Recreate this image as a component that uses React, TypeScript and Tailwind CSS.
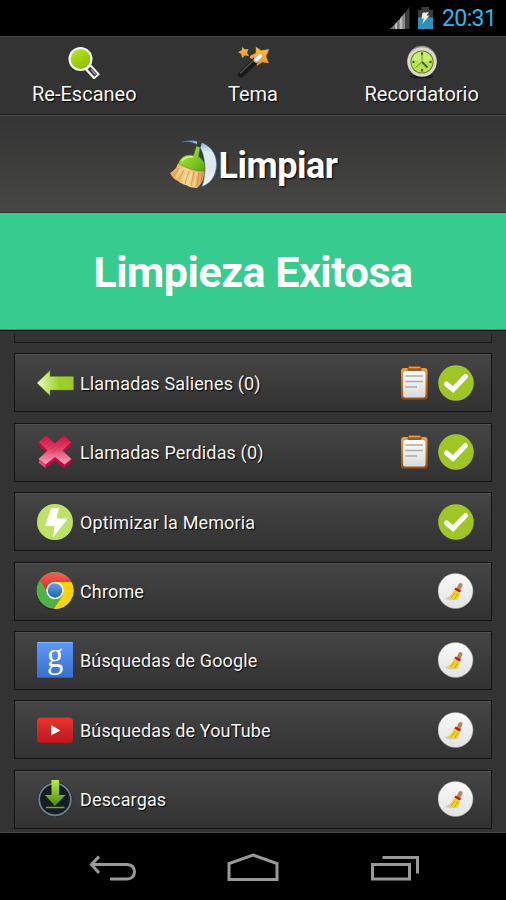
import type { ReactNode } from 'react'

type Row = {
  label: string
  icon: ReactNode
  notes?: boolean
  done?: boolean
}

/* Status bar */
function StatusBar() {
  return (
    <div className="flex items-center justify-end h-9 pr-[10px] bg-black shrink-0">
      <svg width="20" height="22" viewBox="0 0 20 22" className="mr-2">
        <path d="M0 22 L5 17 V22Z" fill="#777" />
        <path d="M5 17 L9 13 V22 H5Z" fill="#c4c4c4" />
        <path d="M7 15 L9 13 V22 H7Z" fill="#777" />
        <path d="M9 13 L13 8 V22 H9Z" fill="#8e8e8e" />
        <path d="M10 11.7 L12 9.2 V22 H10Z" fill="#bbb" />
        <path d="M13 8 L15 5.7 V22 H13Z" fill="#888" />
        <path d="M15 5.7 L19.5 0 V22 H15Z" fill="#3d3d3d" />
      </svg>
      <svg width="15" height="22" viewBox="0 0 15 23" preserveAspectRatio="none" className="mr-[9px] mb-px">
        <path d="M3.5 0 H11 V3 H15 V23 H0 V3 H3.5Z" fill="#3b3b3b" />
        <path d="M0 11 H15 V23 H0Z" fill="#2b92b9" />
        <path d="M4.5 6 L11 5.5 L8.5 9 H11.5 L4 18 L6 12 H3.5Z" fill="#eee" />
      </svg>
      <span className="pt-[2px] text-[23px] leading-[34px] text-[#33b5e5] w-[54px] whitespace-nowrap tracking-[-0.6px]">20:31</span>
    </div>
  )
}

/* Toolbar icons */
function SearchIcon() {
  return (
    <svg width="34" height="34" viewBox="0 0 34 34">
      <defs>
        <linearGradient id="lens" x1="0" y1="0" x2="0.6" y2="1">
          <stop offset="0" stopColor="#c3e34a" />
          <stop offset="0.45" stopColor="#a5d60a" />
          <stop offset="1" stopColor="#93bd00" />
        </linearGradient>
      </defs>
      <path d="M20 21 L30 32" stroke="#f4f4f4" strokeWidth="8" />
      <path d="M22 23 L28.800 30.500" stroke="#3a3a3a" strokeWidth="3.800" />
      <path d="M24 24.500 L28.500 29.500" stroke="#999" strokeWidth="1.300" />
      <circle cx="13.5" cy="14" r="12" fill="#f8f8f8" />
      <circle cx="13.5" cy="14" r="9.9" fill="url(#lens)" />
    </svg>
  )
}

function WandIcon() {
  return (
    <svg width="34" height="34" viewBox="0 0 34 34">
      <defs>
        <linearGradient id="star" x1="0" y1="0" x2="0" y2="1">
          <stop offset="0" stopColor="#ffc640" />
          <stop offset="1" stopColor="#f39312" />
        </linearGradient>
      </defs>
      <path d="M20 2 L25 5.500 L33 4.500 L30 11 L32.500 18 L26.500 17 L21 20.500 L20 14.500 L15.500 10.500 L20 8Z" fill="url(#star)" stroke="#e58c16" strokeWidth="0.500" strokeLinejoin="round" />
      <path d="M5 29.500 L20 15.500" stroke="#191919" strokeWidth="6" strokeLinecap="round" />
      <path d="M4.500 28 L18 15" stroke="#505050" strokeWidth="1.500" strokeLinecap="round" />
      <path d="M20.500 15 L24 11.500" stroke="#aaa" strokeWidth="6" strokeLinecap="round" />
      <path d="M20.500 14.500 L24 11" stroke="#f4f4f4" strokeWidth="4" strokeLinecap="round" />
      <path d="M6.500 2 L8.500 4.500 L12.500 4 L11 7.500 L13 11 L9 10.500 L6 13 L5.200 9 L2 7 L5.500 5.500Z" fill="url(#star)" />
      <path d="M14.500 10.500 L17 9.500 L18 12 L16 14 L13.500 12.500Z" fill="#f5a11d" />
    </svg>
  )
}

function ClockIcon() {
  return (
    <svg width="34" height="34" viewBox="0 0 34 34">
      <ellipse cx="17" cy="31.500" rx="12" ry="2" fill="#1c1c1c" />
      <circle cx="17" cy="15.500" r="14.700" fill="#8a8d80" />
      <circle cx="17" cy="17" r="14.700" fill="#d9dacb" />
      <circle cx="17" cy="17" r="11.600" fill="#6c7e31" />
      <circle cx="17" cy="17" r="10.600" fill="#b7e34f" />
      <path d="M7.500 14 A10 10 0 0 1 26.500 14 Q17 20 7.500 14Z" fill="#d4f184" opacity="0.7" />
      <path d="M17 7.500 V10 M17 24 V26.500 M7.500 17 H9.500 M24.500 17 H26.500" stroke="#405014" strokeWidth="2" />
      <path d="M17 17 V9 M17 17 L10.500 22.500" stroke="#778e39" strokeWidth="1" />
      <path d="M17 17 L22.500 22.500" stroke="#43591a" strokeWidth="1.800" />
    </svg>
  )
}

function BroomLogo() {
  return (
    <svg width="48" height="50" viewBox="0 0 48 50" className="shrink-0">
      <defs>
        <linearGradient id="moon" x1="0" y1="0" x2="0" y2="1">
          <stop offset="0" stopColor="#7fb0dc" />
          <stop offset="0.25" stopColor="#dcecfa" />
          <stop offset="0.6" stopColor="#dfe5ec" />
          <stop offset="1" stopColor="#f6fafe" />
        </linearGradient>
        <linearGradient id="brush" x1="0" y1="0" x2="1" y2="0">
          <stop offset="0" stopColor="#eda24a" />
          <stop offset="0.5" stopColor="#fad694" />
          <stop offset="1" stopColor="#e39a45" />
        </linearGradient>
        <linearGradient id="cap" x1="0" y1="0" x2="1" y2="1">
          <stop offset="0" stopColor="#b9e54c" />
          <stop offset="0.6" stopColor="#83c822" />
          <stop offset="1" stopColor="#5ca510" />
        </linearGradient>
      </defs>
      <path d="M13 3 C31 -2 47.500 8 47.500 25 C47.500 37 41 45 33 47.500 C37 38 38 15 29 6 C23 2.500 18 2 13 3Z" fill="url(#moon)" stroke="#487fae" strokeWidth="0.500" />
      <path d="M9 24 L35 31 C36 38 33 45 28 49 C23 49 20 48 18 46.500 C15 46 11 44 9 42 C6 41 3 38 1 34 C6 31 8 28 9 24Z" fill="url(#brush)" />
      <path d="M10 29 L5 37 M15 31 L10 41 M20 32 L16 45 M25 33 L22 47 M30 34 L28 47 M33.500 34 L32 43" stroke="#c57c31" strokeWidth="0.600" />
      <path d="M12 30 L7 39 M18 32 L14 43 M23 33 L19 45 M27.500 33 L25 47" stroke="#ffe9b9" strokeWidth="0.900" />
      <path d="M9.500 24.500 C11 18 18 14.500 24.500 16.500 L27.500 7 L31 8 L29.500 17.500 C35 21 36.500 26 35.500 32 C27 32.500 16 29 9.500 24.500Z" fill="url(#cap)" stroke="#4c8315" strokeWidth="0.500" />
      <path d="M13 22 C15 19 20 17 24 18" stroke="#dcf797" strokeWidth="1.500" fill="none" />
      <path d="M28.500 2 L33 3 L31.500 8.500 L27.500 7Z" fill="#333b29" />
    </svg>
  )
}

/* Row icons */
function ArrowIcon() {
  return (
    <svg width="38" height="38" viewBox="0 0 38 38">
      <defs>
        <linearGradient id="arrow" x1="0" y1="0" x2="1" y2="0">
          <stop offset="0" stopColor="#eef9c2" />
          <stop offset="0.6" stopColor="#9cd12a" />
          <stop offset="1" stopColor="#9ccb27" />
        </linearGradient>
      </defs>
      <path d="M1 19 L14 6.500 V12.500 H37.500 V26 H14 V31.500Z" fill="url(#arrow)" stroke="#6b9727" strokeWidth="0.500" />
    </svg>
  )
}

function CrossIcon() {
  return (
    <svg width="38" height="38" viewBox="0 0 38 38">
      <defs>
        <linearGradient id="cross" gradientUnits="userSpaceOnUse" x1="19" y1="2" x2="19" y2="33">
          <stop offset="0" stopColor="#d90d43" />
          <stop offset="0.45" stopColor="#e0416b" />
          <stop offset="0.9" stopColor="#ff9bb5" />
        </linearGradient>
      </defs>
      <path d="M3 9 L10 3 L19 10.500 L28 3 L35 9 V13 L27 20 L35 27 V30 L28 35.500 L19 28 L10 35.500 L3 30 V27 L11 20 L3 13Z" fill="#b3103f" />
      <path d="M3 9 L10 2.500 L19 10.500 L28 2.500 L35 9 L26.500 17.500 L35.500 26 L28.500 31.500 L19 24 L9.500 31.500 L2.500 26 L11.500 17.500Z" fill="url(#cross)" />
      <path d="M6 9.500 L11 5 M8.500 12 L13.500 7.500 M11 14.500 L16 10 M13.500 17 L29 4 M16 19.500 L32 6" stroke="#b00d3b" strokeWidth="0.500" opacity="0.6" />
      <path d="M3 27 L9.500 32 V35 L3 30Z" fill="#e2527b" />
    </svg>
  )
}

function BoltIcon() {
  return (
    <svg width="38" height="38" viewBox="0 0 38 38">
      <circle cx="19" cy="19" r="18" fill="#bee268" />
      <path d="M15 5 H23 L20.500 15.500 H32 L17 34.500 L18.500 23 H9Z" fill="#fff" />
    </svg>
  )
}

function ChromeIcon() {
  return (
    <svg width="38" height="40" viewBox="0 0 38 40">
      <defs>
        <linearGradient id="chromeRed" x1="0" y1="0" x2="0" y2="1">
          <stop offset="0" stopColor="#ef6359" />
          <stop offset="1" stopColor="#d8291f" />
        </linearGradient>
        <linearGradient id="chromeBlue" x1="0" y1="0" x2="0" y2="1">
          <stop offset="0" stopColor="#62a5df" />
          <stop offset="1" stopColor="#1e65b2" />
        </linearGradient>
      </defs>
      <circle cx="19" cy="20.500" r="18.800" fill="#242424" />
      <circle cx="19" cy="19.500" r="18.500" fill="#51b147" />
      <path d="M19 11 H35.500 A18.500 18.500 0 0 1 18 38 L27 24Z" fill="#ffd20a" />
      <path d="M4 9 A18.500 18.500 0 0 1 35.500 11 H19 C14 11 10.500 15 10.500 20Z" fill="url(#chromeRed)" />
      <circle cx="19" cy="19.500" r="8.700" fill="#f0f3f5" />
      <circle cx="19" cy="19.500" r="7.200" fill="url(#chromeBlue)" />
    </svg>
  )
}

function GoogleIcon() {
  return (
    <div className="flex items-center justify-center w-9 h-9 ml-px rounded-[1px] bg-linear-to-b from-[#5e98f5] to-[#3970d2] border-t border-t-[#85b4fa] border-b border-b-[#3159a5]">
      <span className="font-['Liberation_Serif',serif] text-[36px] leading-9 text-white relative -top-[5px] scale-x-90">g</span>
    </div>
  )
}

function YoutubeIcon() {
  return (
    <svg width="38" height="38" viewBox="0 0 38 38">
      <defs>
        <linearGradient id="tube" x1="0" y1="0" x2="0" y2="1">
          <stop offset="0" stopColor="#e83430" />
          <stop offset="1" stopColor="#bd171d" />
        </linearGradient>
      </defs>
      <rect x="1" y="6.500" width="36" height="25.500" rx="4" fill="url(#tube)" />
      <path d="M15 14 L24.500 19.500 L15 24.500Z" fill="#fff" />
    </svg>
  )
}

function DownloadIcon() {
  return (
    <svg width="38" height="40" viewBox="0 0 38 40">
      <defs>
        <linearGradient id="down" x1="0" y1="0" x2="0" y2="1">
          <stop offset="0" stopColor="#b8f13d" />
          <stop offset="1" stopColor="#4b8614" />
        </linearGradient>
      </defs>
      <circle cx="19" cy="20.500" r="17.500" fill="#27313a" />
      <circle cx="19" cy="20.500" r="15.800" fill="#151c23" stroke="#78828a" strokeWidth="1.700" />
      <path d="M15.500 1 H23 V16 H29.500 L19 27 L9 16 H15.500Z" fill="url(#down)" />
      <path d="M10 28.500 H28.500" stroke="#69a629" strokeWidth="1.500" />
    </svg>
  )
}

function Clipboard() {
  return (
    <svg width="28" height="34" viewBox="0 0 28 34">
      <defs>
        <linearGradient id="board" x1="0" y1="0" x2="0" y2="1">
          <stop offset="0" stopColor="#e9a150" />
          <stop offset="1" stopColor="#9c4c12" />
        </linearGradient>
        <linearGradient id="paper" x1="0" y1="0" x2="0" y2="1">
          <stop offset="0" stopColor="#fff" />
          <stop offset="1" stopColor="#dadada" />
        </linearGradient>
      </defs>
      <rect x="1" y="2" width="26.500" height="31.500" rx="3" fill="url(#board)" />
      <rect x="3" y="5" width="22.500" height="26.500" rx="2.500" fill="url(#paper)" />
      <rect x="7.500" y="0.500" width="14" height="4.500" rx="1.500" fill="#a35a19" />
      <path d="M9 1.500 H20" stroke="#e3a057" strokeWidth="1.500" />
      <path d="M5.500 10 H23 M5.500 15.500 H23 M5.500 21 H17" stroke="#aaa" strokeWidth="1.500" />
    </svg>
  )
}

function CheckBadge() {
  return (
    <svg width="36" height="36" viewBox="0 0 36 36">
      <circle cx="18" cy="18" r="17.800" fill="#a0c526" />
      <path d="M8.500 19 L15 24.500 L27.500 11.500" fill="none" stroke="#fff" strokeWidth="5" strokeLinecap="round" />
    </svg>
  )
}

function BroomBadge() {
  return (
    <svg width="36" height="36" viewBox="0 0 36 36">
      <defs>
        <linearGradient id="badge" x1="0" y1="0" x2="0" y2="1">
          <stop offset="0" stopColor="#fafafa" />
          <stop offset="1" stopColor="#e2e2e2" />
        </linearGradient>
      </defs>
      <circle cx="17.500" cy="18" r="17.500" fill="url(#badge)" stroke="#999" strokeWidth="0.500" />
      <ellipse cx="14" cy="25.500" rx="6.500" ry="1.800" fill="#ccc" />
      <path d="M20 17 L22.500 12" stroke="#b8874a" strokeWidth="4" strokeLinecap="round" />
      <path d="M16 16.500 L22 19.500 C21.500 23 20.500 25.500 17.500 27 L9.500 24.500 C13 22.500 15 20 16 16.500Z" fill="#f1d22d" />
      <path d="M17 19.500 L13 25 M20 20.500 L16.500 26" stroke="#cda313" strokeWidth="1" />
      <path d="M17 15.500 L22.500 18.500" stroke="#c3162c" strokeWidth="2.500" />
    </svg>
  )
}

const tools = [
  { label: 'Re-Escaneo', icon: <SearchIcon /> },
  { label: 'Tema', icon: <WandIcon /> },
  { label: 'Recordatorio', icon: <ClockIcon /> },
]

const rows: Row[] = [
  { label: 'Llamadas Salienes (0)', icon: <ArrowIcon />, notes: true, done: true },
  { label: 'Llamadas Perdidas (0)', icon: <CrossIcon />, notes: true, done: true },
  { label: 'Optimizar la Memoria', icon: <BoltIcon />, done: true },
  { label: 'Chrome', icon: <ChromeIcon /> },
  { label: 'Búsquedas de Google', icon: <GoogleIcon /> },
  { label: 'Búsquedas de YouTube', icon: <YoutubeIcon /> },
  { label: 'Descargas', icon: <DownloadIcon /> },
]

function RowCard({ row }: { row: Row }) {
  return (
    <div className="flex items-center h-[59px] shrink-0 pl-[21px] pr-[17px] border border-[#141414] bg-linear-to-b from-[#454545] to-[#323232] shadow-[inset_0_1px_0_#505050]">
      <div className="flex items-center w-[38px] shrink-0">{row.icon}</div>
      <span className="flex-1 pl-[6px] pt-px text-[18px] tracking-[0.14px] text-[#f5f5f5] whitespace-nowrap text-shadow-[1px_1px_1px_#000]">{row.label}</span>
      {row.notes && <div className="mr-[10px]"><Clipboard /></div>}
      {row.done ? <CheckBadge /> : <BroomBadge />}
    </div>
  )
}

export default function App() {
  return (
    <div className="flex flex-col w-[506px] h-[900px] overflow-hidden bg-[#333] font-[Roboto,sans-serif]">
      <StatusBar />

      {/* Toolbar */}
      <div className="grid grid-cols-3 h-[79px] shrink-0 border-t border-t-[#444] border-b border-b-[#1d1d1d]">
        {tools.map((tool) => (
          <div key={tool.label} className="flex flex-col items-center pt-2">
            {tool.icon}
            <span className="text-[20px] leading-6 mt-[3px] text-[#f5f5f5] text-shadow-[1px_1px_1px_#000]">{tool.label}</span>
          </div>
        ))}
      </div>

      {/* Title */}
      <div className="flex items-center justify-center h-[98px] shrink-0 border-t border-t-[#505050] border-b border-b-[#333] bg-linear-to-b from-[#343434] to-[#474745]">
        <BroomLogo />
        <h1 className="pt-[3px] pl-[2px] text-[36px] tracking-[-0.5px] font-bold text-white text-shadow-[1px_1px_2px_#000]">Limpiar</h1>
      </div>

      {/* Result banner */}
      <div className="flex items-center justify-center h-[117px] shrink-0 bg-[#37cb8f] border-b border-b-[#2b9a6d]">
        <h2 className="pt-[3px] text-[43px] tracking-[-0.5px] font-bold text-white">Limpieza Exitosa</h2>
      </div>

      {/* Task list */}
      <div className="h-[503px] shrink-0 pt-[3px] border-t border-t-black border-b border-b-[#444] overflow-hidden">
        <div className="flex flex-col gap-[10.4px] px-[14px]">
          <div className="h-[9px] shrink-0 border border-t-0 border-[#1b1b1b]"></div>
          {rows.map((row) => (
            <RowCard key={row.label} row={row} />
          ))}
        </div>
      </div>

      {/* Navigation bar */}
      <div className="h-[67px] shrink-0 bg-black">
        <svg width="506" height="67" viewBox="0 0 506 67" fill="none" stroke="#999" strokeWidth="3">
          <path d="M99 23.500 L91.500 31.500 L99 40 M91.500 31.500 H127 Q134.500 32 134.500 39 Q134 46 127 46 H110" />
          <path d="M229 46.500 V30.500 L253 22 L277 30.500 V46.500Z" />
          <path d="M382.500 24.500 H417.500 V40.500 M372.500 31.500 H409.500 V46 H372.500Z" />
        </svg>
      </div>
    </div>
  )
}
